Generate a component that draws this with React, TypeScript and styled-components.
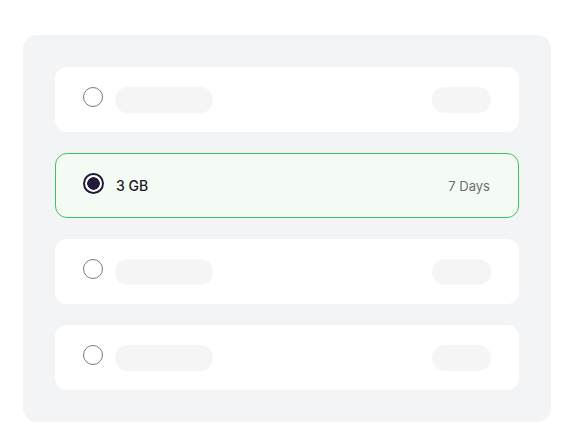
import React from 'react';
import styled, { createGlobalStyle, css } from 'styled-components';

interface Plan {
  id: number;
  label?: string;
  duration?: string;
  selected?: boolean;
}

const plans: Plan[] = [
  { id: 1 },
  { id: 2, label: '3 GB', duration: '7 Days', selected: true },
  { id: 3 },
  { id: 4 },
];

const App = () => {
  return (
    <>
      <GlobalStyle />
      <Page>
        <Panel>
          {plans.map((plan) => (
            <Card key={plan.id} selected={!!plan.selected}>
              <Radio selected={!!plan.selected} />
              {plan.label ? <Label>{plan.label}</Label> : <Skeleton width={98} />}
              <Spacer />
              {plan.duration ? (
                <Duration>{plan.duration}</Duration>
              ) : (
                <Skeleton width={59} />
              )}
            </Card>
          ))}
        </Panel>
      </Page>
    </>
  );
};

export default App;

const GlobalStyle = createGlobalStyle`
  body {
    margin: 0;
    background: #ffffff;
    font-family: Inter, "Noto Sans", sans-serif;
  }
`;

const Page = styled.div`
  padding: 35px 27px 23px 23px;
`;

const Panel = styled.div`
  width: 528px;
  box-sizing: border-box;
  padding: 32px;
  background: #f3f4f6;
  border-radius: 14px;
  display: flex;
  flex-direction: column;
  gap: 21px;
`;

const Card = styled.div<{ selected: boolean }>`
  height: 65px;
  flex-shrink: 0;
  box-sizing: border-box;
  display: flex;
  align-items: center;
  padding: 0 27px 0 27px;
  background: #ffffff;
  border-radius: 12px;
  border: 1px solid transparent;
  ${(props) =>
    props.selected &&
    css`
      background: #f3fbf4;
      border-color: #3ac75a;
    `}
`;

const Radio = styled.div<{ selected: boolean }>`
  width: 20px;
  height: 20px;
  box-sizing: border-box;
  border-radius: 50%;
  border: 1px solid #7a7a7a;
  margin: 0 12px 5px 0;
  flex-shrink: 0;
  ${(props) =>
    props.selected &&
    css`
      width: 21px;
      height: 21px;
      margin: 0 12px 4px 0;
      border: 2px solid #1f1a35;
      background: radial-gradient(circle, #221c3a 0 6px, #ffffff 6.5px);
    `}
`;

const Skeleton = styled.div<{ width: number }>`
  width: ${(props) => props.width}px;
  height: 26px;
  border-radius: 13px;
  background: #f5f5f5;
`;

const Spacer = styled.div`
  flex: 1;
`;

const Label = styled.span`
  font-size: 14px;
  font-weight: 500;
  color: #1d1a2e;
`;

const Duration = styled.span`
  font-size: 13px;
  color: #6e6e6e;
  margin-right: 1px;
`;
